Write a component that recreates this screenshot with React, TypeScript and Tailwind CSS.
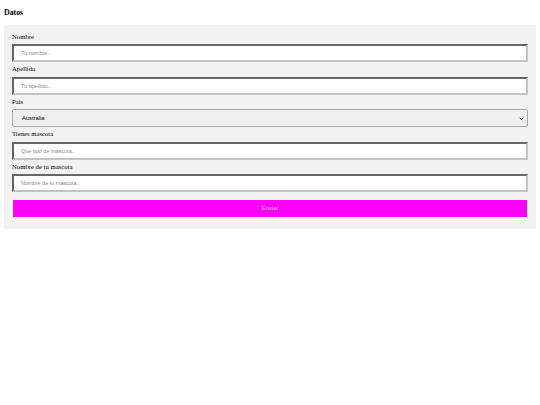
import React from "react";

const fields = [
  { label: "Nombre", placeholder: "Tu nombre.." },
  { label: "Apellido", placeholder: "Tu apellido.." },
];

const petFields = [
  { label: "Tienes mascota", placeholder: "Que tipo de mascota.." },
  { label: "Nombre de tu mascota", placeholder: "Nombre de tu mascota.." },
];

function Label({ children }: { children: React.ReactNode }) {
  return (
    <label className="block leading-[14.5px] text-[6.7px] text-black [font-family:'Liberation_Serif',serif]">
      {children}
    </label>
  );
}

function TextField({ label, placeholder }: { label: string; placeholder: string }) {
  return (
    <div>
      <Label>{label}</Label>
      <input
        type="text"
        placeholder={placeholder}
        className="block w-full h-[18px] bg-white border-2 border-t-[#666] border-l-[#666] border-b-[#c4c4c4] border-r-[#c4c4c4] pl-[7px] text-[5.5px] text-black placeholder:text-[#8a8a8a] outline-none [font-family:'Liberation_Sans',sans-serif]"
      />
    </div>
  );
}

export default function App() {
  return (
    <div className="min-h-[405px] bg-white p-[4px]">
      <h3 className="h-[21px] leading-[17px] text-[7.8px] font-bold text-black [font-family:'Liberation_Serif',serif]">
        Datos
      </h3>
      <form className="bg-[#f2f2f2] rounded-[2px] px-[8px] pt-[4.5px] pb-[12px]">
        {fields.map((f) => (
          <TextField key={f.label} label={f.label} placeholder={f.placeholder} />
        ))}
        <div>
          <Label>Pais</Label>
          <div className="relative">
            <select
              defaultValue="australia"
              className="block w-full h-[18px] appearance-none bg-[#efefef] border border-[#a9a9a9] rounded-[2px] pl-[9px] text-[5.8px] text-black outline-none [font-family:'Liberation_Sans',sans-serif]"
            >
              <option value="australia">Australia</option>
              <option value="canada">Canada</option>
              <option value="usa">USA</option>
            </select>
            <svg
              viewBox="0 0 10 10"
              className="absolute right-[4px] top-[6.5px] w-[5px] h-[5px] pointer-events-none"
            >
              <path d="M1.5 3.5 L5 7 L8.5 3.5" fill="none" stroke="#222" strokeWidth="1.8" />
            </svg>
          </div>
        </div>
        {petFields.map((f) => (
          <TextField key={f.label} label={f.label} placeholder={f.placeholder} />
        ))}
        <button
          type="button"
          className="block w-[calc(100%-2px)] mx-[1px] mt-[8px] h-[17px] bg-[#ff00ff] text-[#f7c2f7] text-[6px] [font-family:'Liberation_Sans',sans-serif]"
        >
          Enviar
        </button>
      </form>
    </div>
  );
}
